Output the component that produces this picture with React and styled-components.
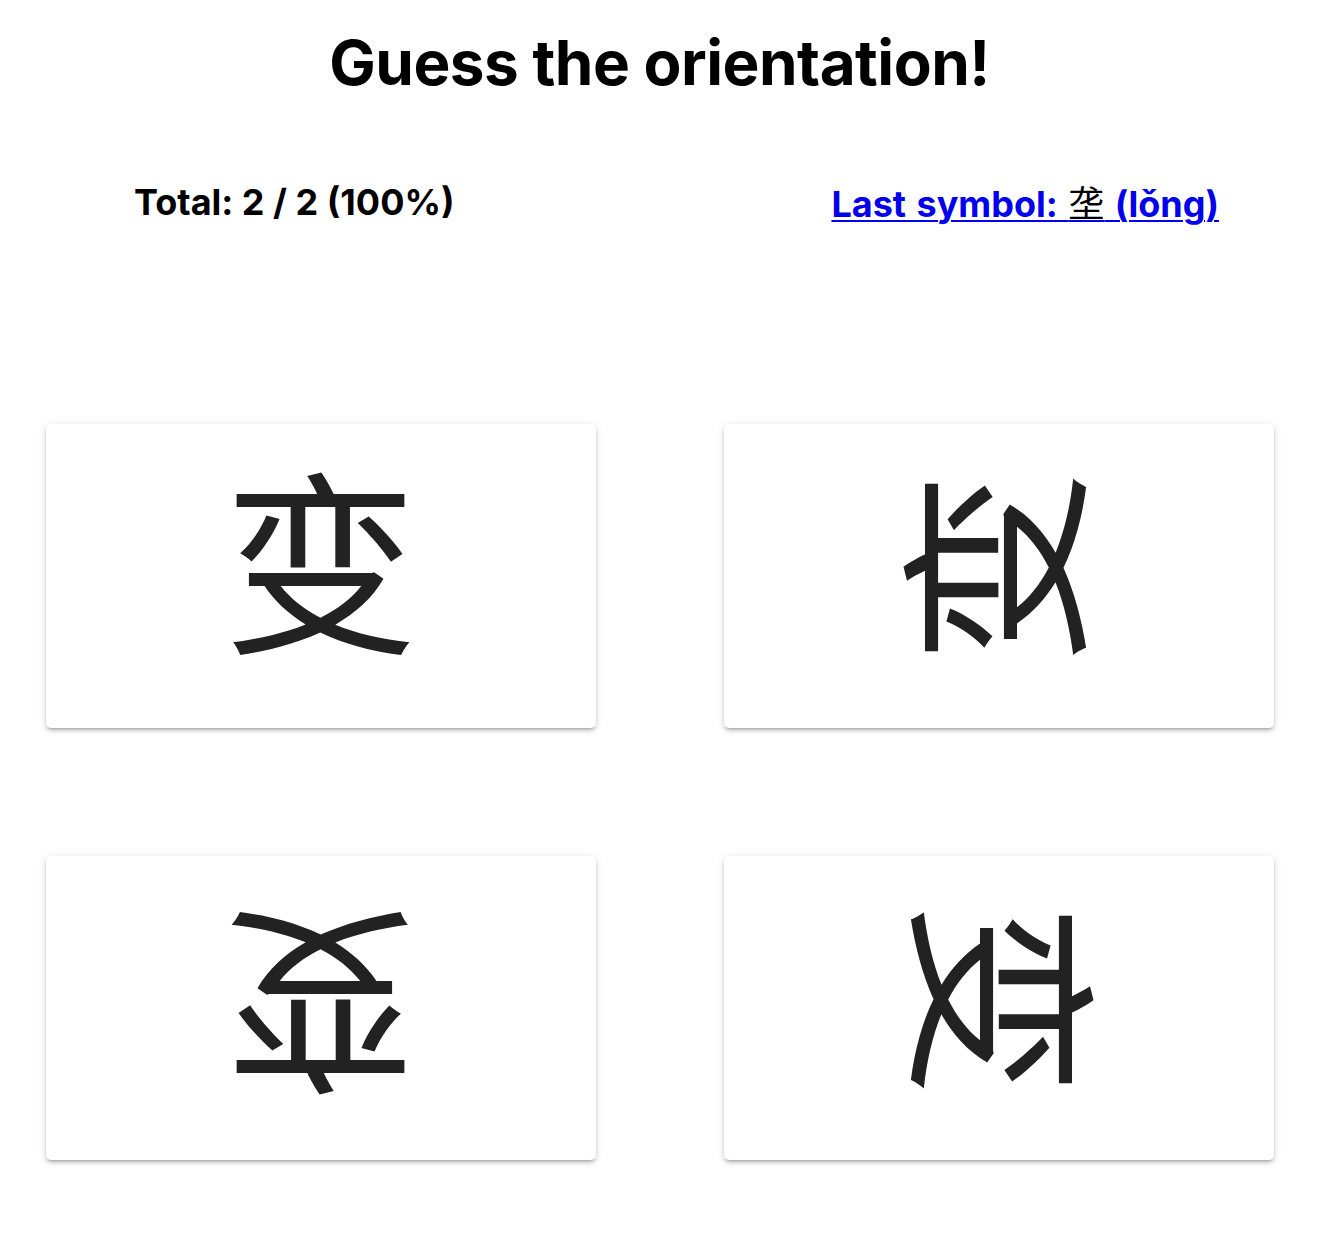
import React from "react";
import styled, { createGlobalStyle } from "styled-components";

const GlobalStyle = createGlobalStyle`
  body {
    margin: 0;
    background: #ffffff;
    font-family: Inter, "Noto Sans", "Noto Sans CJK SC", sans-serif;
  }
`;

const Page = styled.div`
  width: 1319px;
  display: flex;
  flex-direction: column;
  align-items: center;
  padding-bottom: 60px;
`;

const Title = styled.h1`
  margin: 0;
  padding-top: 24px;
  font-size: 62px;
  line-height: 77px;
  font-weight: 700;
  letter-spacing: -0.5px;
  color: #000;
`;

const StatsRow = styled.div`
  align-self: stretch;
  display: flex;
  justify-content: space-between;
  align-items: center;
  margin-top: 79px;
  padding: 0 100px 0 134px;
  font-size: 36px;
  font-weight: 700;
  line-height: 38px;
`;

const Score = styled.div`
  color: #000;
`;

const LastLink = styled.a`
  color: #0000ee;
  text-decoration: underline;
  text-decoration-thickness: 2px;
  text-underline-offset: 3px;
  margin-top: 2px;
  word-spacing: 2px;
`;

const Hanzi = styled.span`
  color: #000;
  font-weight: 400;
  font-family: "Noto Sans CJK SC", sans-serif;
`;

const Grid = styled.div`
  display: grid;
  grid-template-columns: repeat(2, 550px);
  gap: 128px;
  margin-top: 201px;
`;

const Card = styled.button`
  width: 550px;
  height: 304px;
  display: flex;
  align-items: center;
  justify-content: center;
  padding: 0;
  border: none;
  border-radius: 5px;
  background: #fff;
  cursor: pointer;
  box-shadow: 0px 3px 3px -2px rgba(0, 0, 0, 0.22),
    0px 3px 4px 0px rgba(0, 0, 0, 0.14), 0px 1px 8px 0px rgba(0, 0, 0, 0.1);
`;

const Glyph = styled.span`
  display: block;
  font-family: "Noto Sans CJK SC", sans-serif;
  font-size: 195px;
  line-height: 1;
  color: #222;
  padding-bottom: 26px;
  margin-bottom: 18px;
  transform: rotate(${(p) => p.$angle}deg);
`;

const options = [0, -90, 180, 90];

const App = () => {
  return (
    <Page>
      <GlobalStyle />
      <Title>Guess the orientation!</Title>
      <StatsRow>
        <Score>Total: 2 / 2 (100%)</Score>
        <LastLink href="#">
          Last symbol: <Hanzi>垄</Hanzi> (lǒng)
        </LastLink>
      </StatsRow>
      <Grid>
        {options.map((angle) => (
          <Card key={angle}>
            <Glyph $angle={angle}>变</Glyph>
          </Card>
        ))}
      </Grid>
    </Page>
  );
};

export default App;
